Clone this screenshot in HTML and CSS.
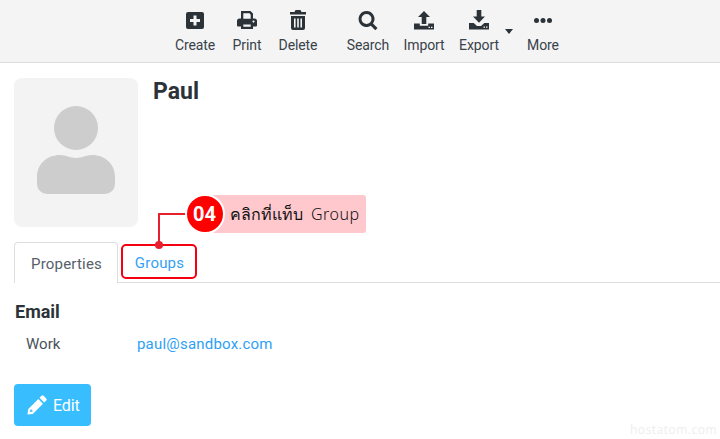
FILE: index.html
```html
<!DOCTYPE html>
<html lang="en">
<head>
    <meta charset="UTF-8">
    <meta name="viewport" content="width=device-width, initial-scale=1.0">
    <title>Contact</title>
    <link rel="stylesheet" href="styles.css">
</head>
<body>
    <div class="toolbar">
        <div class="tool">
            <svg class="tool-icon" viewBox="0 0 20 20"><path fill-rule="evenodd" d="M3 2h14a2 2 0 0 1 2 2v13a2 2 0 0 1-2 2H3a2 2 0 0 1-2-2V4a2 2 0 0 1 2-2zm5.500 3.500v3.500H5v3h3.500v3.500h3V12H15V9h-3.500V5.500z"/></svg>
            <span>Create</span>
        </div>
        <div class="tool tool-print">
            <svg class="tool-icon" viewBox="0 0 20 20"><path fill-rule="evenodd" d="M4 1h9.500L16 3.500v5h1.500A2.500 2.500 0 0 1 20 11v4.500a1 1 0 0 1-1 1h-3V19H4v-2.500H1a1 1 0 0 1-1-1V11a2.500 2.500 0 0 1 2.500-2.500H4zM6.300 3.300v5.500h7.400V4.700L12.500 3.300zM6.300 14.500v2.300h7.400v-2.300zM16.500 10.600a1 1 0 1 0 .01 0z"/></svg>
            <span>Print</span>
        </div>
        <div class="tool tool-delete">
            <svg class="tool-icon" viewBox="0 0 20 20"><path fill-rule="evenodd" d="M7.500 0h5l1 2h4.500v2.500H2V2h4.500zM3 6h14v12a2 2 0 0 1-2 2H5a2 2 0 0 1-2-2zM6 8.500v9h1.600v-9zM9.200 8.500v9h1.600v-9zM12.400 8.500v9H14v-9z"/></svg>
            <span>Delete</span>
        </div>
        <div class="tool tool-search">
            <svg class="tool-icon" viewBox="0 0 20 20"><path fill-rule="evenodd" d="M8.500 1a8 8 0 0 1 6.500 12.600l4.500 4.500-2.200 2.200-4.500-4.500A8 8 0 1 1 8.500 1zm0 3a5 5 0 1 0 0 10 5 5 0 0 0 0-10z"/></svg>
            <span>Search</span>
        </div>
        <div class="tool tool-import">
            <svg class="tool-icon" viewBox="0 0 20 20"><path fill-rule="evenodd" d="M10 1l6 6h-3.700v7H7.700V7H4zM0 13.500h5.800v2.300h8.400v-2.300H20V19.500H0zM14.500 16.800v1.300h1.500v-1.300zM17 16.800v1.300h1.500v-1.300z"/></svg>
            <span>Import</span>
        </div>
        <div class="tool tool-export">
            <svg class="tool-icon" viewBox="0 0 20 20"><path fill-rule="evenodd" d="M7.700 0h4.600v6.500H16l-6 6.300-6-6.300h3.700zM0 13h4.700l3.300 3h4l3.300-3H20v6.500H0zM14.500 16.500v1.300h1.500v-1.300zM17 16.500v1.300h1.500v-1.300z"/></svg>
            <span>Export</span>
        </div>
        <div class="caret"></div>
        <div class="tool tool-more">
            <svg class="tool-icon" viewBox="0 0 20 20"><circle cx="3.500" cy="10.500" r="2.500"/><circle cx="10" cy="10.500" r="2.500"/><circle cx="16.500" cy="10.500" r="2.500"/></svg>
            <span>More</span>
        </div>
    </div>

    <div class="content">
        <div class="head">
            <div class="photo">
                <svg class="person" viewBox="0 0 78 88"><circle cx="39" cy="22" r="22"/><path d="M0 71C0 58 10 49 23 49C29 49 33 52 39 52C45 52 49 49 55 49C68 49 78 58 78 71V78a10 10 0 0 1-10 10H10a10 10 0 0 1-10-10z"/></svg>
            </div>
            <h1 class="name">Paul</h1>
        </div>

        <div class="tabs">
            <div class="tab tab-active">Properties</div>
            <div class="tab tab-link">Groups</div>
        </div>

        <h2 class="section-title">Email</h2>
        <div class="field">
            <span class="field-label">Work</span>
            <a class="field-value">paul@sandbox.com</a>
        </div>

        <button class="edit-btn">
            <svg class="edit-icon" viewBox="0 0 20 20"><path fill-rule="evenodd" d="M14.500 .8a1.500 1.500 0 0 1 2.100 0l2.600 2.600a1.500 1.500 0 0 1 0 2.100l-2 2-4.700-4.700zM11.300 4l4.700 4.700L5.800 18.900.5 19.500l.6-5.300zM3.500 14.500l-.6 2.600 2.600-.6-.3-1.700z"/></svg>
            Edit
        </button>
    </div>

    <!-- annotation laid over the tabs -->
    <div class="tab-highlight"></div>
    <div class="leader"></div>
    <div class="leader-dot"></div>
    <div class="callout">
        <span class="callout-thai">คลิกที่แท็บ</span>
        <span class="callout-latin">Group</span>
    </div>
    <div class="callout-num">04</div>
    <div class="watermark">hostatom.com</div>
</body>
</html>
```

FILE: styles.css
```css
body, html {
    margin: 0;
    padding: 0;
    height: 100%;
    overflow: hidden;
    background: #fff;
    font-family: Roboto, "Liberation Sans", sans-serif;
    color: #333a40;
}
.toolbar {
    display: flex;
    align-items: flex-start;
    height: 62px;
    padding-left: 175px;
    background: #f4f4f4;
    border-bottom: 1px solid #dbdfe2;
}
.tool {
    display: flex;
    flex-direction: column;
    align-items: center;
    width: 40px;
    padding-top: 10px;
    font-size: 14px;
    letter-spacing: -0.100px;
    line-height: 16px;
    white-space: nowrap;
    color: #39424a;
}
.tool-icon {
    width: 20px;
    height: 20px;
    margin-bottom: 7px;
    fill: #2b3238;
}
.tool-print { margin-left: 12px; }
.tool-delete { margin-left: 11px; }
.tool-search { margin-left: 30px; }
.tool-import { margin-left: 16px; }
.tool-export { margin-left: 15px; }
.tool-more { margin-left: 10px; }
.caret {
    width: 0;
    height: 0;
    margin: 29px 0 0 6px;
    border-left: 4.500px solid transparent;
    border-right: 4.500px solid transparent;
    border-top: 5px solid #2b3238;
}
.content {
    padding: 15px 14px 0;
}
.head {
    display: flex;
    gap: 15px;
}
.photo {
    display: flex;
    justify-content: center;
    align-items: center;
    width: 124px;
    height: 149px;
    background: #f3f3f3;
    border-radius: 8px;
}
.person {
    width: 78px;
    height: 88px;
    margin-bottom: 5px;
    fill: #cdcdcd;
}
.name {
    margin: 1px 0 0;
    font-size: 23px;
    line-height: 26px;
    font-weight: 700;
    color: #2b3238;
}
.tabs {
    display: flex;
    height: 40px;
    margin: 15px -14px 0 0;
    border-bottom: 1px solid #dedede;
}
.tab {
    font-size: 15px;
    line-height: 42px;
    letter-spacing: 0.200px;
    box-sizing: border-box;
}
.tab-active {
    width: 104px;
    height: 41px;
    padding-left: 1px;
    text-align: center;
    background: #fff;
    color: #56606a;
    border: 1px solid #dedede;
    border-bottom: 0;
    border-radius: 4px 4px 0 0;
}
.tab-link {
    width: 82px;
    padding-left: 1px;
    text-align: center;
    color: #349ff5;
}
.section-title {
    margin: 18px 0 0 1px;
    font-size: 18px;
    line-height: 22px;
    font-weight: 700;
    color: #2b3238;
}
.field {
    display: flex;
    margin-top: 11px;
    font-size: 15px;
    line-height: 20px;
}
.field-label {
    width: 111px;
    margin-left: 12px;
    color: #4a5158;
}
.field-value {
    color: #2f9ff5;
    letter-spacing: 0.200px;
}
.edit-btn {
    display: flex;
    align-items: center;
    gap: 6px;
    width: 77px;
    height: 42px;
    margin-top: 30px;
    padding: 0 0 0 13px;
    border: 0;
    border-radius: 4px;
    background: #38bdfe;
    color: #fff;
    font-family: Roboto, sans-serif;
    font-size: 16px;
    letter-spacing: -0.100px;
}
.edit-icon {
    width: 20px;
    height: 20px;
    fill: #fff;
}
.tab-highlight {
    position: absolute;
    left: 121px;
    top: 244px;
    width: 76px;
    height: 35px;
    box-sizing: border-box;
    border: 2px solid #f50010;
    border-radius: 5px;
}
.leader {
    position: absolute;
    left: 158px;
    top: 213px;
    width: 30px;
    height: 32px;
    box-sizing: border-box;
    border-left: 2px solid #e8202e;
    border-top: 2px solid #e8202e;
}
.leader-dot {
    position: absolute;
    left: 155px;
    top: 241px;
    width: 8px;
    height: 8px;
    border-radius: 50%;
    background: #e8202e;
}
.callout {
    position: absolute;
    left: 212px;
    top: 195px;
    display: flex;
    align-items: center;
    gap: 8px;
    width: 154px;
    height: 38px;
    box-sizing: border-box;
    padding-left: 18px;
    background: #ffc8cd;
    border-radius: 3px;
    color: #111;
}
.callout-thai {
    font-family: "Noto Sans", "DejaVu Sans", sans-serif;
    font-weight: 300;
    font-size: 16px;
}
.callout-latin {
    font-family: "Noto Sans", Roboto, sans-serif;
    font-weight: 300;
    font-size: 16px;
    letter-spacing: 0.500px;
}
.callout-num {
    position: absolute;
    left: 185px;
    top: 194px;
    width: 35px;
    height: 36px;
    padding-right: 1px;
    line-height: 36px;
    text-align: center;
    border: 2px solid #fff;
    border-radius: 50%;
    background: #fe0000;
    color: #fff;
    font-size: 20px;
    font-weight: 700;
}
.watermark {
    position: absolute;
    right: 3px;
    bottom: 1px;
    font-family: "Open Sans", sans-serif;
    font-size: 12px;
    letter-spacing: 0.500px;
    color: #eeeeee;
}
```
